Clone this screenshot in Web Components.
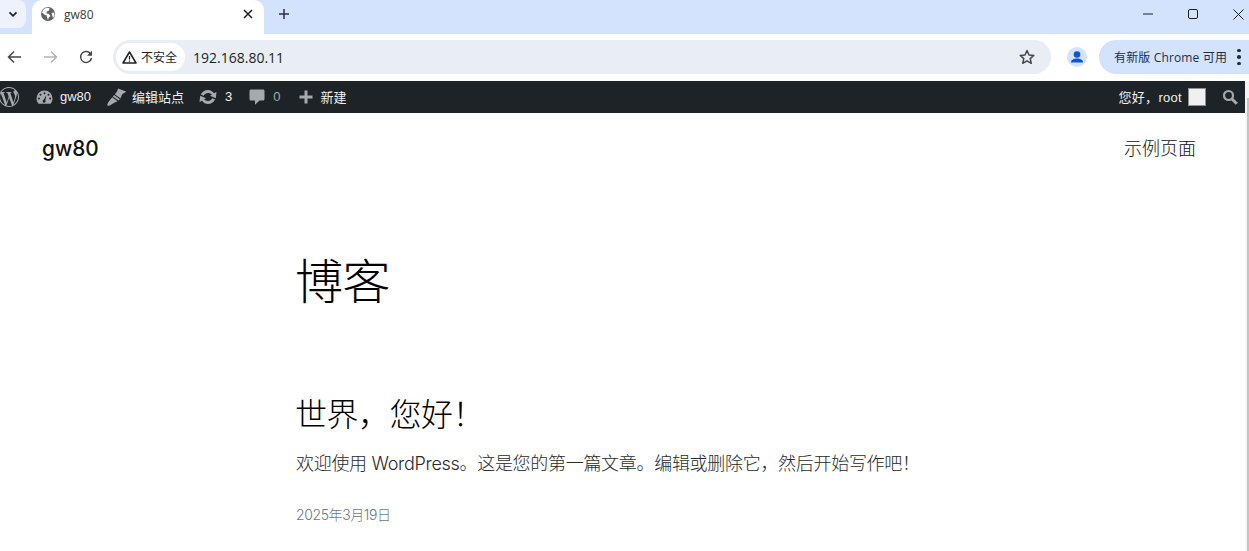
<!doctype html>
<html lang="zh-CN"><head><meta charset="utf-8"><title>gw80</title>
<style>
html,body{margin:0;padding:0;background:#fff;height:551px;overflow:hidden}
body{display:flex;flex-direction:column;font-family:"Inter","Noto Sans CJK SC",sans-serif}
.view{flex:1;display:flex;min-height:0}
.page{flex:1;min-width:0;display:flex;flex-direction:column}
</style></head><body>
<chrome-tabstrip></chrome-tabstrip>
<chrome-toolbar></chrome-toolbar>
<div class="view"><div class="page">
<wp-adminbar></wp-adminbar>
<site-header></site-header>
<blog-main></blog-main>
</div><page-scrollbar></page-scrollbar></div>
<script>
function def(name,html){customElements.define(name,class extends HTMLElement{constructor(){super();this.attachShadow({mode:'open'}).innerHTML=html}})}
const UI='"Open Sans","Noto Sans CJK SC",sans-serif';
def('page-scrollbar',`<style>
:host{display:block;width:4px;flex:none;background:#f5f5f5;padding-top:17px;box-sizing:border-box}
div{height:100%;margin-left:2px;background:#c4c4c4}
</style><div></div>`);
def('chrome-tabstrip',`<style>
:host{display:flex;height:34px;background:#d3e3fd;font-family:${UI};color:#1f1f1f;align-items:stretch;flex:none}
.down{width:26px;height:28px;border-radius:0 8px 8px 0;background:#edf2fc;display:flex;align-items:center;justify-content:center;margin-right:6px}
.tab{width:232px;height:34px;background:#fff;border-radius:10px 10px 0 0;display:flex;align-items:center;box-sizing:border-box;padding:0 11px 6px 9px;font-size:12px;color:#3c3c3c}
.tab .t{margin-left:9px;flex:1}
.plus{margin:0 0 6px 14px;width:16px;display:flex;align-items:center}
.sp{flex:1}
.win{display:flex;align-items:center;height:28px;margin-right:5px;gap:35px}
.win svg{display:block}
</style>
<div class="down"><svg width="12" height="12" viewBox="0 0 12 12"><path d="M2.500 4.300 6 7.800l3.500-3.500" fill="none" stroke="#1f1f1f" stroke-width="1.700"/></svg></div>
<div class="tab"><svg width="14" height="14" viewBox="0 0 14 14"><circle cx="7" cy="7" r="7" fill="#5f6368"/><path d="M1 5.500 4 8l1.500.3.500 2.200 1 2.500.8-2.600L9.500 9 7.500 6.800 5.500 6.500 5.800 4.500 8 3.500 8.500 1 5 .8 2.500 2.500zM10.500 6l2.500-.5.500 3-1.500 2.500z" fill="#fff"/></svg><span class="t">gw80</span><svg width="10" height="10" viewBox="0 0 10 10"><path d="M1 1l8 8M9 1l-8 8" stroke="#1f1f1f" stroke-width="1.500"/></svg></div>
<div class="plus"><svg width="12" height="12" viewBox="0 0 12 12"><path d="M6 1v10M1 6h10" stroke="#303030" stroke-width="1.500"/></svg></div>
<div class="sp"></div>
<div class="win"><svg width="10" height="2" viewBox="0 0 10 2"><path d="M0 1h10" stroke="#1f1f1f"/></svg><svg width="10" height="10" viewBox="0 0 10 10"><rect x=".5" y=".5" width="9" height="9" rx="1.500" fill="none" stroke="#1f1f1f"/></svg><svg width="11" height="11" viewBox="0 0 11 11"><path d="M.5.5l10 10M10.500.5l-10 10" stroke="#1f1f1f"/></svg></div>`);
def('chrome-toolbar',`<style>
:host{display:flex;height:47px;background:#fff;align-items:center;font-family:${UI};flex:none;box-sizing:border-box;padding-bottom:1px}
.nav{display:flex;align-items:center;width:113px;flex:none;padding-left:7px;box-sizing:border-box;gap:21px}
.omni{width:938px;flex:none;height:34px;background:#e9eef6;border-radius:17px;display:flex;align-items:center;box-sizing:border-box;padding:0 16px 0 3px}
.chip{height:28px;width:69px;flex:none;background:#fff;border-radius:14px;display:flex;align-items:center;box-sizing:border-box;padding-left:6px;font-size:12px;color:#1f1f1f;gap:4px}
.url{margin-left:8px;font-size:14px;color:#1f1f1f;flex:1;letter-spacing:0}
.prof{width:20px;height:20px;flex:none;border-radius:50%;background:#d3e3fd;margin-left:16px;overflow:hidden;display:flex}
.upd{margin-left:12px;width:150px;flex:none;height:34px;background:#d3e3fd;border-radius:17px 0 0 17px;display:flex;align-items:center;box-sizing:border-box;padding-left:15px;font-size:12px;color:#1f2d4d;gap:10px;white-space:nowrap;letter-spacing:.15px}
.dots{display:flex;flex-direction:column;gap:3px}
.dots i{width:3.500px;height:3.500px;border-radius:50%;background:#1f2d4d;display:block}
</style>
<div class="nav">
<svg width="15" height="14" viewBox="0 0 15 14"><path d="M14 7H2M7 1.500 1.500 7 7 12.500" fill="none" stroke="#444746" stroke-width="1.500"/></svg>
<svg width="15" height="14" viewBox="0 0 15 14"><path d="M1 7h12M8 1.500 13.500 7 8 12.500" fill="none" stroke="#b0b2b5" stroke-width="1.500"/></svg>
<svg width="14" height="14" viewBox="0 0 14 14"><path d="M12 4.500A5.500 5.500 0 1 0 12.500 8" fill="none" stroke="#444746" stroke-width="1.500"/><path d="M13 .8v5H8z" fill="#444746"/></svg>
</div>
<div class="omni"><div class="chip"><svg width="15" height="13" viewBox="0 0 15 13"><path d="M7.500 1 14 12H1z" fill="none" stroke="#1f1f1f" stroke-width="1.500" stroke-linejoin="round"/><path d="M7.500 5v3.500M7.500 9.500v1.200" stroke="#1f1f1f" stroke-width="1.300"/></svg><span>不安全</span></div><span class="url">192.168.80.11</span>
<svg width="16" height="16" viewBox="0 0 16 16"><path d="M8 1.500 10 6l4.800.4-3.600 3.200 1.100 4.700L8 11.800l-4.300 2.500 1.100-4.700L1.200 6.400 6 6z" fill="none" stroke="#444746" stroke-width="1.500" stroke-linejoin="round"/></svg></div>
<div class="prof"><svg width="20" height="20" viewBox="0 0 20 20"><circle cx="10" cy="7.500" r="3.300" fill="#0b57d0"/><path d="M4 15.500c0-3 3-4 6-4s6 1 6 4z" fill="#0b57d0"/></svg></div>
<div class="upd"><span>有新版 Chrome 可用</span><span class="dots"><i></i><i></i><i></i></span></div>`);
const I={
wp:`<svg width="20" height="20" viewBox="0 0 24 24" fill="#a7aaad"><path d="M21.469 6.825c.84 1.537 1.318 3.3 1.318 5.175 0 3.979-2.156 7.456-5.363 9.325l3.295-9.527c.615-1.54.82-2.771.82-3.864 0-.405-.026-.78-.07-1.11m-7.981.105c.647-.03 1.232-.105 1.232-.105.582-.075.514-.93-.067-.899 0 0-1.755.135-2.88.135-1.064 0-2.85-.15-2.85-.15-.585-.03-.661.855-.075.885 0 0 .54.061 1.125.09l1.68 4.605-2.37 7.08L5.354 6.9c.649-.03 1.234-.1 1.234-.1.585-.075.516-.93-.065-.896 0 0-1.746.138-2.874.138-.2 0-.438-.008-.69-.015C4.911 3.15 8.235 1.215 12 1.215c2.809 0 5.365 1.072 7.286 2.833-.046-.003-.091-.009-.141-.009-1.06 0-1.812.923-1.812 1.914 0 .89.513 1.643 1.06 2.531.411.72.89 1.643.89 2.977 0 .915-.354 1.994-.821 3.479l-1.075 3.585-3.9-11.61.001.014zM12 22.784c-1.059 0-2.081-.153-3.048-.437l3.237-9.406 3.315 9.087c.024.053.05.101.078.149-1.12.393-2.325.609-3.582.609M1.211 12c0-1.564.336-3.05.935-4.390L7.290 21.709C3.694 19.960 1.212 16.271 1.211 12M12 0C5.385 0 0 5.385 0 12s5.385 12 12 12 12-5.385 12-12S18.615 0 12 0"/></svg>`,
dash:`<svg width="17" height="15" viewBox="0 0 17 15"><path fill-rule="evenodd" fill="#a7aaad" d="M8.500 0.500a8 8 0 0 1 8 8c0 2-.7 3.800-1.900 5.200H2.400A8 8 0 0 1 .5 8.500a8 8 0 0 1 8-8zM8.500 2.200a1 1 0 1 0 0 2 1 1 0 0 0 0-2zM4.500 3.800a1 1 0 1 0 0 2 1 1 0 0 0 0-2zM12.500 3.800a1 1 0 1 0 0 2 1 1 0 0 0 0-2zM2.900 7.600a1 1 0 1 0 0 2 1 1 0 0 0 0-2zM14.100 7.600a1 1 0 1 0 0 2 1 1 0 0 0 0-2zM10.300 5l-2.600 4.700a1.500 1.500 0 1 0 1.700.7z"/></svg>`,
brush:`<svg width="19" height="18" viewBox="0 0 19 18"><path fill="#a7aaad" d="M11 0.500 19 3.500c-1 1.500-2.700 1.800-4 2.900L13.500 10.500 7.800 6.300 9.500 4.300C10.300 3.300 10.700 1.800 11 0.500zM7.100 7.100l5.700 4.200-1.300 1.300L5.800 8.500zM5.300 9.300l5.200 4-3.700 1.800c-1.500.8-3.200 2.200-4.800 2.700-1 .3-2-.6-1.700-1.600.5-1.500 1.800-3 2.700-4.300z"/></svg>`,
upd:`<svg width="18" height="16" viewBox="0 0 18 16"><path fill="#a7aaad" d="M9 1c2.500 0 4.700 1.300 5.900 3.300L17.500 3l-.7 6.300-5.800-2.500 1.900-1.100C11.900 4.700 10.500 4 9 4 7.100 4 5.500 5.100 4.700 6.700L1.800 5.500C3.100 2.900 5.900 1 9 1zM1.200 6.700 7 9.200l-1.900 1.100C6.100 11.300 7.500 12 9 12c1.900 0 3.500-1.100 4.300-2.700l2.900 1.200C14.900 13.100 12.100 15 9 15c-2.500 0-4.700-1.300-5.900-3.300L.5 13z"/></svg>`,
com:`<svg width="16" height="16" viewBox="0 0 16 16"><path fill="#a7aaad" d="M2 .5h12c.9 0 1.500.6 1.500 1.500v8c0 .9-.6 1.500-1.500 1.500H10.500L6 15.800V11.500H2C1.100 11.500.5 10.900.5 10V2C.5 1.100 1.100.5 2 .5z"/></svg>`,
plus:`<svg width="14" height="14" viewBox="0 0 14 14"><path fill="#a7aaad" d="M5.500 .5h3v5h5v3h-5v5h-3v-5h-5v-3h5z"/></svg>`,
search:`<svg width="16" height="16" viewBox="0 0 16 16"><circle cx="6.500" cy="6.500" r="4.500" fill="none" stroke="#a7aaad" stroke-width="2.200"/><path d="M10 10l4.800 4.800" stroke="#a7aaad" stroke-width="3"/></svg>`};
def('wp-adminbar',`<style>
:host{display:flex;height:32px;background:#1d2327;align-items:center;flex:none;font-family:"Liberation Sans","Noto Sans CJK SC",sans-serif;font-size:13px;color:#f0f0f1;white-space:nowrap}
.i{display:flex;align-items:center;gap:7px}
.i span{position:relative;top:-1px}
.m{color:#a7aaad}
.sp{flex:1}
.i .av{width:18px;height:18px;box-sizing:border-box;background:#f0f0f1;border:1px solid #8c8f94;margin-left:6px;display:block;top:0}
.hi{letter-spacing:.3px}
</style>
<div class="i" style="margin-left:-1px">${I.wp}</div>
<div class="i" style="margin-left:17px">${I.dash}<span>gw80</span></div>
<div class="i" style="margin-left:16px;gap:6px">${I.brush}<span>编辑站点</span></div>
<div class="i" style="margin-left:15px;gap:8px">${I.upd}<span>3</span></div>
<div class="i" style="margin-left:17px;gap:8px">${I.com}<span class="m">0</span></div>
<div class="i" style="margin-left:18px;gap:8px">${I.plus}<span>新建</span></div>
<div class="sp"></div>
<div class="i" style="gap:0"><span class="hi">您好，root</span><span class="av"></span></div>
<div class="i" style="margin:0 7px 0 16px">${I.search}</div>`);
def('site-header',`<style>
:host{display:flex;justify-content:space-between;align-items:center;padding:18px 49px 0 42px;height:32px;flex:none;color:#111}
.t{font-size:20.800px;font-weight:500;font-family:"Inter","Noto Sans CJK SC",sans-serif;padding-top:3px}
.n{font-size:18px;font-weight:300;font-family:"Inter","Noto Sans CJK SC",sans-serif}
</style><div class="t">gw80</div><div class="n">示例页面</div>`);
def('blog-main',`<style>
:host{display:block;padding:0 0 0 296px;color:#000;font-family:"Inter","Noto Sans CJK SC",sans-serif;font-weight:300}
h1{margin:83px 0 0 -1px;font-size:48px;line-height:72px;font-weight:300;letter-spacing:-.5px}
h2{margin:73px 0 0 -1px;font-size:32px;line-height:48px;font-weight:300;letter-spacing:-.5px}
p{margin:11px 0 0;font-size:18px;line-height:28px;color:#2a2a2a;white-space:nowrap;letter-spacing:-.3px}
.d{margin-top:26px;font-size:14px;line-height:22px;color:#6b7785;letter-spacing:-.4px}
</style><h1>博客</h1><h2>世界，您好！</h2><p>欢迎使用 WordPress。这是您的第一篇文章。编辑或删除它，然后开始写作吧！</p><div class="d">2025年3月19日</div>`);
</script></body></html>
